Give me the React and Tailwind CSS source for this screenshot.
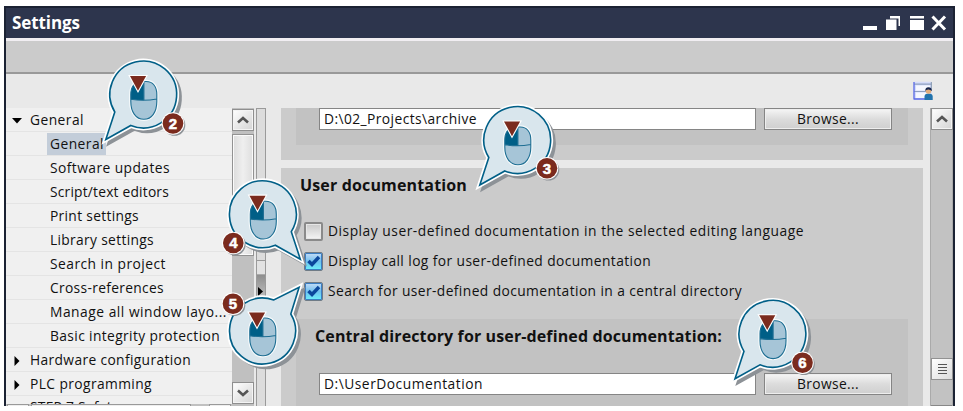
import { useLayoutEffect, useRef, useState } from "react";

// Text whose tracking is adjusted so that it spans exactly `w` pixels.
function Fit({ w, className = "", children }) {
  const ref = useRef(null);
  const [spacing, setSpacing] = useState(0);
  useLayoutEffect(() => {
    const natural = ref.current.getBoundingClientRect().width;
    setSpacing((w - natural) / children.length);
  }, [w, children]);
  return (
    <span ref={ref} className={`inline-block whitespace-pre ${className}`} style={{ letterSpacing: `${spacing}px` }}>
      {children}
    </span>
  );
}

const children = [
  ["General", 54, true],
  ["Software updates", 120],
  ["Script/text editors", 119],
  ["Print settings", 89],
  ["Library settings", 104],
  ["Search in project", 116],
  ["Cross-references", 114],
  ["Manage all window layo...", 177],
  ["Basic integrity protection", 170],
];

function Branch({ label, w, open }) {
  return (
    <div className="flex h-6 shrink-0 items-center border-b border-[#e4e4e4]">
      <svg className="ml-1.5 mr-2 mt-0.5 h-[10px] w-[10px]" viewBox="0 0 10 10">
        <path d={open ? "M0 2H10L5 7.5Z" : "M2.5 0L7.5 5L2.5 10Z"} fill="#000" />
      </svg>
      <Fit w={w} className="pt-px">{label}</Fit>
    </div>
  );
}

function ArrowButton({ down }) {
  return (
    <div className="flex h-[22px] w-[22px] shrink-0 items-center justify-center border border-[#8f8f8f] bg-gradient-to-br from-white to-[#d4d4d4] shadow-[inset_0_0_0_1px_#f4f4f4]">
      <svg width="12" height="8" viewBox="0 0 12 8">
        <path d={down ? "M1 1.5L6 6L11 1.5" : "M1 6.5L6 2L11 6.5"} fill="none" stroke="#555" strokeWidth="2.6" />
      </svg>
    </div>
  );
}

function Browse() {
  return (
    <div className="ml-2 flex h-[22px] w-32 items-center justify-center border border-[#858585] bg-gradient-to-b from-[#f6f6f6] via-[#dcdcdc] to-[#cfcfcf] shadow-[inset_0_0_0_1px_#eeeeee]">
      <Fit w={62}>Browse...</Fit>
    </div>
  );
}

function PathRow({ value, w }) {
  return (
    <div className="flex pl-[23px]">
      <div className="flex h-[22px] w-[437px] items-center border border-[#858585] bg-white pl-1">
        <Fit w={w}>{value}</Fit>
      </div>
      <Browse />
    </div>
  );
}

function Check({ label, w, checked }) {
  return (
    <div className="flex h-[30px] items-center">
      {checked ? (
        <div className="h-[19px] w-[19px] rounded-[2px] border border-[#6f7b86] bg-gradient-to-b from-[#c4dcf8] via-[#6fc0ee] to-[#6af2fa] shadow-[inset_0_0_0_1px_#3c7fc4]">
          <svg width="17" height="17" viewBox="0 0 17 17">
            <path d="M3.5 8L7 11.5L14 4" fill="none" stroke="#0b479c" strokeWidth="3.4" />
          </svg>
        </div>
      ) : (
        <div className="h-[19px] w-[19px] rounded-[2px] border-2 border-[#8a8a8a] bg-gradient-to-b from-[#c9c9c9] to-[#f4f4f4] shadow-[inset_0_0_0_1px_#e6e6e6]" />
      )}
      <Fit w={w} className="ml-[5px]">{label}</Fit>
    </div>
  );
}

const tails = {
  sw: "M-28.5 17.5L-37.5 45L-12.5 31A33.4 33.4 0 1 0 -28.5 17.5Z",
  se: "M28.5 17.5L37.5 45L12.5 31A33.4 33.4 0 1 1 28.5 17.5Z",
  ne: "M28.5 -17L36.8 -43.8L11.5 -31A33 33 0 1 0 28.5 -17Z",
};

// Click callout with its step number, drawn over the window.
function Callout({ x, y, tail, bx, by, n }) {
  const d = tails[tail];
  return (
    <g transform={`translate(${x} ${y})`}>
      <path d={d} transform="translate(3.4 3.4)" fill="#8d9297" stroke="#8d9297" strokeWidth="3.6" />
      <path d={d} fill="#fff" stroke="#fff" strokeWidth="5" />
      <path d={d} fill="#d9e6ed" stroke="#005f87" strokeWidth="1.6" />
      <path d="M.6 -13H3C9.5 -13 13.5 -8 13.5 0V7C13.5 17.5 8.5 24.8 .6 24.8C-7.4 24.8 -12.5 17.5 -12.5 7V0C-12.5 -8 -8.5 -13 -2 -13Z" fill="#a6c5d7" stroke="#f6fafb" strokeWidth="3.4" />
      <path d="M.6 -13H3C9.5 -13 13.5 -8 13.5 0V7C13.5 17.5 8.5 24.8 .6 24.8C-7.4 24.8 -12.5 17.5 -12.5 7V0C-12.5 -8 -8.5 -13 -2 -13Z" fill="#a6c5d7" />
      <path d="M.6 -13H-2C-8.5 -13 -12.5 -8 -12.5 0V4.8Q-6 5.8 .6 5.8Z" fill="#005f87" />
      <path d="M.6 -13H3C9.5 -13 13.5 -8 13.5 0V7C13.5 17.5 8.5 24.8 .6 24.8C-7.4 24.8 -12.5 17.5 -12.5 7V0C-12.5 -8 -8.5 -13 -2 -13ZM.6 -13V5.8M-12.5 4.8Q1 6.8 13.5 4.5" fill="none" stroke="#1d6e93" strokeWidth="1.1" />
      <path d="M-13.3 -18.5H2.8L-5.3 -3.8Z" fill="#7b2b1e" stroke="#fff" strokeWidth="2.2" paintOrder="stroke" />
      <g transform={`translate(${bx} ${by})`}>
        <circle cx="1.5" cy="1.5" r="10.8" fill="#8d9297" />
        <circle r="11.3" fill="#fff" />
        <circle r="10.3" fill="#7b2b1e" />
        <text y="5.3" textAnchor="middle" className="fill-white stroke-white stroke-[0.5px] font-['Liberation_Sans',sans-serif] text-[15px] font-bold">{n}</text>
      </g>
    </g>
  );
}

export default function App() {
  return (
    <div className="relative h-[411px] w-[963px] overflow-hidden bg-white pl-1 pt-1.5 font-['Open_Sans','Noto_Sans',sans-serif] text-[13.8px] leading-[22px] text-[#111]">
      <div className="flex h-[400px] w-[951px] flex-col overflow-hidden border-x-2 border-t-2 border-[#1b2233] bg-[#e9e9e9]">
        <header className="flex h-[30px] shrink-0 items-center justify-between bg-[#2d354d] pl-1.5 pr-1.5 text-white">
          <Fit w={68} className="text-[17px] font-bold">Settings</Fit>
          <svg width="84" height="16" viewBox="0 0 84 16">
            <path d="M0 11H14V15H0Z" fill="#fff" />
            <path d="M27 1H37V11H35.5V3.5H27Z M23 4.5H33.5V15H23Z M47 1H61V3.5H47Z M47 5H61V15H47Z" fill="#fff" />
            <path d="M69.5 1.5L82 14.5M82 1.5L69.5 14.5" stroke="#fff" strokeWidth="3" />
          </svg>
        </header>
        <div className="h-[36px] shrink-0 border-b-2 border-t-[3px] border-b-[#999] border-t-[#f1eef2] bg-[#cbcbcb]" />
        <div className="flex h-[34px] shrink-0 items-center justify-end pr-5">
          <svg width="20" height="20" viewBox="0 0 20 20">
            <path d="M1 .8H18.5V18.5H.5Z" fill="#d5dcfa" />
            <path d="M3 4.5H17V9.5H3ZM3 11.5H17V17H3Z" fill="#f5f7ff" />
            <path d="M1 3.2H18.5M1 10.5H18" stroke="#8fa0c0" strokeWidth="1.2" />
            <path d="M1 18V1M.5 18H13" fill="none" stroke="#5a6ae6" strokeWidth="1.3" />
            <path d="M18.3 1V10" stroke="#8195ad" />
            <path d="M11.5 19V15.5Q11.5 12.5 15.5 12.5Q19.7 12.5 19.7 15.5V19Z" fill="#2273ad" />
            <circle cx="15.5" cy="10" r="2.8" fill="#e3ad7c" />
            <path d="M12.3 10Q12 6.2 15.5 6.2Q19 6.2 18.7 10Q17 8.2 15.2 8.4Q13 8.6 12.3 10Z" fill="#17254c" />
          </svg>
        </div>
        <main className="flex min-h-0 flex-1">
          <nav className="flex w-[248px] shrink-0 flex-col overflow-hidden">
            <div className="flex min-h-0 flex-1">
              <div className="flex h-full w-[226px] flex-col overflow-hidden bg-[#f0f0f0]">
                <Branch label="General" w={54} open />
                {children.map(([label, w, active]) => (
                  <div key={label} className="flex h-6 shrink-0 items-center border-b border-[#e4e4e4] pl-[41px]">
                    <span className={active ? "flex h-[22px] items-center bg-[#c3cdd9] pl-[3px] pr-0.5" : "flex pl-[3px]"}>
                      <Fit w={w} className="pt-px">{label}</Fit>
                    </span>
                  </div>
                ))}
                <Branch label="Hardware configuration" w={161} />
                <Branch label="PLC programming" w={122} />
                <div className="h-6 shrink-0 pl-6">
                  <Fit w={89}>STEP 7 Safety</Fit>
                </div>
              </div>
              <div className="flex w-[22px] flex-col bg-[#c0c0c0] pt-px">
                <ArrowButton />
                <div className="mt-[3px] h-[122px] border border-[#929292] bg-gradient-to-r from-[#dcdcdc] via-[#efefef] to-[#dedede] shadow-[inset_0_0_0_1px_#fafafa]" />
                <div className="flex-1" />
                <ArrowButton down />
              </div>
            </div>
            <div className="flex h-0.5 shrink-0 gap-0.5 bg-[#c0c0c0] pl-px">
              <div className="w-[22px] border border-b-0 border-[#999] bg-[#eee]" />
              <div className="w-[160px] border border-b-0 border-[#999] bg-[#eee]" />
              <div className="ml-4 w-[22px] border border-b-0 border-[#999] bg-[#eee]" />
            </div>
          </nav>
          <div className="ml-0.5 flex w-2.5 shrink-0 flex-col border-x border-t border-[#9a9a9a] bg-[#dcdcdc]">
            <div className="h-[152px] border-b border-[#999]" />
            <div className="h-[13px] bg-[#e2e2e2]" />
            <div className="flex h-[34px] items-center border-t border-[#aaa] bg-gradient-to-b from-[#8e8e8e] to-[#d8d8d8]">
              <svg width="7" height="9" viewBox="0 0 7 9"><path d="M1 0L6 4.5L1 9Z" /></svg>
            </div>
          </div>
          <section className="ml-[15px] flex w-[642px] shrink-0 flex-col overflow-hidden">
            <div className="h-[52px] shrink-0 bg-[#cbcbcb] px-[15px]">
              <div className="h-[37px] bg-[#c2c2c2]">
                <PathRow value="D:\02_Projects\archive" w={153} />
              </div>
            </div>
            <div className="mt-2 flex flex-1 shrink-0 flex-col bg-[#cbcbcb]">
              <div className="flex h-[34px] items-center pl-[19px]">
                <Fit w={167} className="text-[16px] font-bold">User documentation</Fit>
              </div>
              <div className="flex h-[117px] flex-col pl-[23px] pt-[14px]">
                <Check label="Display user-defined documentation in the selected editing language" w={476} />
                <Check checked label="Display call log for user-defined documentation" w={323} />
                <Check checked label="Search for user-defined documentation in a central directory" w={414} />
              </div>
              <div className="mx-[15px] flex-1 bg-[#c2c2c2]">
                <div className="flex h-[54px] items-start pl-[19px] pt-[6px]">
                  <Fit w={407} className="text-[16px] font-bold">Central directory for user-defined documentation:</Fit>
                </div>
                <PathRow value="D:\UserDocumentation" w={159} />
              </div>
            </div>
          </section>
          <div className="ml-[7px] flex w-[23px] flex-col border-x border-[#aaa] bg-[#c2c2c2]">
            <ArrowButton />
            <div className="mt-[228px] flex h-[22px] w-[22px] shrink-0 flex-col items-center justify-center gap-0.5 border border-[#929292] bg-gradient-to-br from-white to-[#dcdcdc]">
              {[0, 1, 2, 3].map((i) => (
                <div key={i} className="h-px w-[9px] bg-[#555]" />
              ))}
            </div>
            <div className="mt-auto h-px bg-[#888]" />
          </div>
        </main>
      </div>
      <svg className="absolute inset-0" width="963" height="411" viewBox="0 0 963 411">
        <Callout x={143.3} y={94.5} tail="sw" bx={29.7} by={29} n="2" />
        <Callout x={517.3} y={140} tail="sw" bx={29.7} by={28.3} n="3" />
        <Callout x={262.8} y={214.2} tail="se" bx={-29.5} by={28.8} n="4" />
        <Callout x={262.3} y={331} tail="ne" bx={-29.3} by={-27.3} n="5" />
        <Callout x={772.5} y={333.8} tail="sw" bx={30} by={29} n="6" />
      </svg>
    </div>
  );
}
